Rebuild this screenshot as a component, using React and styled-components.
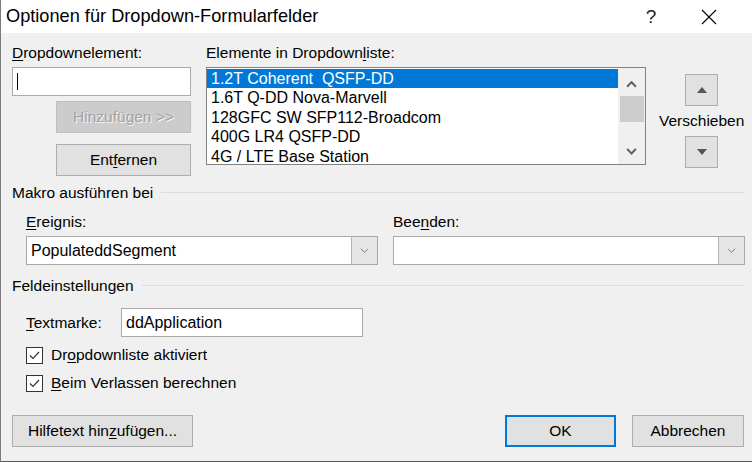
import React from "react";
import styled, { createGlobalStyle } from "styled-components";

const Global = createGlobalStyle`
  html, body { margin:0; padding:0; background:#f0f0f0; }
  body { font-family:"Liberation Sans", Arial, sans-serif; color:#000; }
  u { text-decoration-thickness:1px; text-underline-offset:2px; }
`;

const items = [
  "1.2T Coherent  QSFP-DD",
  "1.6T Q-DD Nova-Marvell",
  "128GFC SW SFP112-Broadcom",
  "400G LR4 QSFP-DD",
  "4G / LTE Base Station",
];

function Chevron({ up, size = 10, color = "#606060", stroke = 1.6 }) {
  return (
    <svg width={size} height={size * 0.6} viewBox="0 0 10 6">
      <path
        d={up ? "M1 5.2 L5 1 L9 5.2" : "M1 0.8 L5 5 L9 0.8"}
        fill="none"
        stroke={color}
        strokeWidth={stroke}
      />
    </svg>
  );
}

function Check() {
  return (
    <svg width="13" height="13" viewBox="0 0 13 13">
      <path d="M2 6.5 L5 9.5 L11 3" fill="none" stroke="#333" strokeWidth="1.2" />
    </svg>
  );
}

function Combo({ value }) {
  return (
    <ComboBox>
      <ComboText>{value}</ComboText>
      <ComboButton>
        <Chevron size={9} color="#777" stroke={1} />
      </ComboButton>
    </ComboBox>
  );
}

export default function App() {
  return (
    <>
      <Global />
      <Window>
        <TitleBar>
          <Title>Optionen für Dropdown-Formularfelder</Title>
          <TitleButtons>
            <TitleBtn>?</TitleBtn>
            <TitleBtn>
              <svg width="16" height="16" viewBox="0 0 16 16">
                <path d="M1 1 L15 15 M15 1 L1 15" stroke="#000" strokeWidth="1.1" />
              </svg>
            </TitleBtn>
          </TitleButtons>
        </TitleBar>
        <Body>
          <TopGrid>
            <LeftCol>
              <Label><u>D</u>ropdownelement:</Label>
              <TextInput $width="179px">
                <Caret />
              </TextInput>
              <Button $w="135px" $mt="5px" $disabled>Hinzufügen &gt;&gt;</Button>
              <Button $w="135px" $mt="11px">Ent<u>f</u>ernen</Button>
            </LeftCol>
            <MidCol>
              <Label>Elemente in Dropdown<u>l</u>iste:</Label>
              <ListBox>
                <ListRows>
                  {items.map((t, i) => (
                    <Row key={t} $selected={i === 0}>{t}</Row>
                  ))}
                </ListRows>
                <ScrollBar>
                  <Chevron up size={11} stroke={1.8} />
                  <Thumb />
                  <Spacer />
                  <Chevron size={11} stroke={1.8} />
                </ScrollBar>
              </ListBox>
            </MidCol>
            <RightCol>
              <MoveBtn>
                <svg width="10" height="6" viewBox="0 0 10 6"><path d="M0 6 L5 0 L10 6Z" fill="#555" /></svg>
              </MoveBtn>
              <MoveLabel>Verschieben</MoveLabel>
              <MoveBtn>
                <svg width="10" height="6" viewBox="0 0 10 6"><path d="M0 0 L5 6 L10 0Z" fill="#555" /></svg>
              </MoveBtn>
            </RightCol>
          </TopGrid>

          <GroupHead $mt="8px">
            <span>Makro ausführen bei</span>
            <GroupLine />
          </GroupHead>
          <MacroGrid>
            <Field>
              <Label><u>E</u>reignis:</Label>
              <Combo value="PopulateddSegment" />
            </Field>
            <Field>
              <Label>Bee<u>n</u>den:</Label>
              <Combo value="" />
            </Field>
          </MacroGrid>

          <GroupHead $mt="12px">
            <span>Feldeinstellungen</span>
            <GroupLine />
          </GroupHead>
          <Settings>
            <MarkRow>
              <MarkLabel><u>T</u>extmarke:</MarkLabel>
              <TextInput $width="242px">ddApplication</TextInput>
            </MarkRow>
            <CheckRow $mt="9px">
              <CheckBox><Check /></CheckBox>
              <span>Dr<u>o</u>pdownliste aktiviert</span>
            </CheckRow>
            <CheckRow $mt="10px">
              <CheckBox><Check /></CheckBox>
              <span><u>B</u>eim Verlassen berechnen</span>
            </CheckRow>
          </Settings>

          <Footer>
            <Button $w="181px">Hilfetext hin<u>z</u>ufügen...</Button>
            <FooterRight>
              <Button $w="111px" $primary>OK</Button>
              <Button $w="112px">Abbrechen</Button>
            </FooterRight>
          </Footer>
        </Body>
      </Window>
    </>
  );
}

const Window = styled.div`
  width:752px;
  height:462px;
  background:#f0f0f0;
  display:flex;
  flex-direction:column;
  overflow:hidden;
  box-sizing:border-box;
  border-left:1px solid #7a7a7a;
  border-bottom:1px solid #5a5a5a;
`;

const TitleBar = styled.div`
  height:33px;
  background:#fff;
  display:flex;
  align-items:center;
  justify-content:space-between;
  padding-left:5px;
  flex-shrink:0;
`;

const Title = styled.div`
  font-size:18.2px;
  color:#000;
`;

const TitleButtons = styled.div`
  display:flex;
  align-items:center;
  height:100%;
`;

const TitleBtn = styled.div`
  width:46px;
  height:100%;
  display:flex;
  align-items:center;
  justify-content:center;
  font-size:19px;
  color:#222;
  &:last-child{ width:70px; padding-right:8px; }
`;

const Body = styled.div`
  padding:11px 8px 0 11px;
  display:flex;
  flex-direction:column;
  font-size:15.5px;
`;

const TopGrid = styled.div`
  display:grid;
  grid-template-columns:179px 440px 1fr;
  column-gap:15px;
`;

const LeftCol = styled.div`
  display:flex;
  flex-direction:column;
  align-items:flex-end;
  & > :first-child{ align-self:flex-start; }
`;

const MidCol = styled.div`
  display:flex;
  flex-direction:column;
`;

const RightCol = styled.div`
  display:flex;
  flex-direction:column;
  align-items:center;
  padding-top:30px;
  margin-left:-2px;
`;

const Label = styled.div`
  height:18px;
  line-height:18px;
  margin-bottom:5px;
  white-space:nowrap;
`;

const TextInput = styled.div`
  width:${p => p.$width};
  height:29px;
  box-sizing:border-box;
  background:#fff;
  border:1px solid #a9a9a9;
  display:flex;
  align-items:center;
  padding-left:4px;
  font-size:16px;
`;

const Caret = styled.div`
  width:1px;
  height:17px;
  background:#000;
`;

const Button = styled.div`
  width:${p => p.$w};
  height:32px;
  margin-top:${p => p.$mt || 0};
  box-sizing:border-box;
  display:flex;
  align-items:center;
  justify-content:center;
  background:${p => (p.$disabled ? "#cccccc" : "#e1e1e1")};
  border:${p => (p.$primary ? "2px solid #0078d7" : p.$disabled ? "1px solid #bfbfbf" : "1px solid #adadad")};
  color:${p => (p.$disabled ? "#a3a3a3" : "#000")};
  text-shadow:${p => (p.$disabled ? "1px 1px 0 #f4f4f4" : "none")};
  font-size:15.5px;
  white-space:nowrap;
`;

const ListBox = styled.div`
  height:98px;
  box-sizing:border-box;
  border:1px solid #828282;
  background:#fff;
  display:flex;
`;

const ListRows = styled.div`
  flex:1;
  padding-top:1px;
`;

const Row = styled.div`
  height:19.4px;
  line-height:19.4px;
  padding-left:4px;
  font-size:16px;
  background:${p => (p.$selected ? "#0078d7" : "transparent")};
  color:${p => (p.$selected ? "#fff" : "#000")};
  white-space:pre;
`;

const ScrollBar = styled.div`
  width:27px;
  background:#f0f0f0;
  display:flex;
  flex-direction:column;
  align-items:center;
  padding:13px 0 9px;
  box-sizing:border-box;
`;

const Thumb = styled.div`
  width:24px;
  height:26px;
  background:#cdcdcd;
  margin-top:8px;
`;

const Spacer = styled.div`
  flex:1;
`;

const MoveBtn = styled.div`
  width:33px;
  height:32px;
  box-sizing:border-box;
  border:1px solid #adadad;
  background:#e1e1e1;
  display:flex;
  align-items:center;
  justify-content:center;
`;

const MoveLabel = styled.div`
  height:30px;
  line-height:30px;
  white-space:nowrap;
`;

const GroupHead = styled.div`
  display:flex;
  align-items:center;
  height:18px;
  margin-top:${p => p.$mt};
  span{ white-space:nowrap; padding-right:8px; }
`;

const GroupLine = styled.div`
  flex:1;
  height:1px;
  background:#dcdcdc;
  margin-top:-2px;
`;

const MacroGrid = styled.div`
  display:grid;
  grid-template-columns:352px 352px;
  column-gap:15px;
  padding-left:14px;
  margin-top:11px;
`;

const Field = styled.div`
  display:flex;
  flex-direction:column;
`;

const ComboBox = styled.div`
  height:29px;
  box-sizing:border-box;
  border:1px solid #a9a9a9;
  background:#fff;
  display:flex;
`;

const ComboText = styled.div`
  flex:1;
  display:flex;
  align-items:center;
  padding-left:4px;
  font-size:16px;
`;

const ComboButton = styled.div`
  width:25px;
  background:#e5e5e5;
  border-left:1px solid #b4b4b4;
  display:flex;
  align-items:center;
  justify-content:center;
`;

const Settings = styled.div`
  padding-left:14px;
  margin-top:13px;
  display:flex;
  flex-direction:column;
`;

const MarkRow = styled.div`
  display:flex;
  align-items:center;
`;

const MarkLabel = styled.div`
  width:95px;
`;

const CheckRow = styled.div`
  display:flex;
  align-items:center;
  margin-top:${p => p.$mt};
  gap:8px;
`;

const CheckBox = styled.div`
  width:17px;
  height:17px;
  box-sizing:border-box;
  border:1px solid #333;
  background:#fff;
  display:flex;
  align-items:center;
  justify-content:center;
`;

const Footer = styled.div`
  display:flex;
  justify-content:space-between;
  margin-top:23px;
`;

const FooterRight = styled.div`
  display:flex;
  gap:16px;
`;
